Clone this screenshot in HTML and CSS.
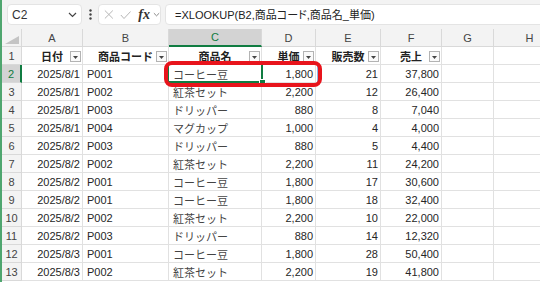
FILE: index.html
```html
<!DOCTYPE html>
<html lang="ja">
<head>
    <meta charset="UTF-8">
    <meta name="viewport" content="width=device-width, initial-scale=1.0">
    <title>XLOOKUP</title>
    <link rel="stylesheet" href="styles.css">
</head>
<body>
    <div class="formula-bar">
        <div class="name-box">
            <span>C2</span>
            <svg width="9" height="6" viewBox="0 0 9 6"><polyline points="1,1 4.5,4.5 8,1" fill="none" stroke="#444" stroke-width="1.2"/></svg>
        </div>
        <div class="grip">
            <svg width="3" height="11" viewBox="0 0 3 11"><circle cx="1.5" cy="1.5" r="1.2" fill="#444"/><circle cx="1.5" cy="5.5" r="1.2" fill="#444"/><circle cx="1.5" cy="9.5" r="1.2" fill="#444"/></svg>
        </div>
        <div class="fx-box">
            <svg class="icon-x" width="11" height="11" viewBox="0 0 11 11"><path d="M1 1L10 10M10 1L1 10" stroke="#b4b4b4" stroke-width="1.1"/></svg>
            <svg class="icon-ok" width="13" height="10" viewBox="0 0 13 10"><polyline points="1,5 4.5,9 12,1" fill="none" stroke="#b4b4b4" stroke-width="1.1"/></svg>
            <i class="fx">fx</i>
            <svg width="8" height="5" viewBox="0 0 8 5"><polyline points="1,1 4,4 7,1" fill="none" stroke="#777" stroke-width="1"/></svg>
        </div>
        <div class="formula">=XLOOKUP(B2,商品コード,商品名_単価)</div>
    </div>

    <div class="sheet-wrap">
        <div class="sheet" id="sheet"></div>
        <div class="spill"></div>
        <div class="selection"><span class="handle"></span></div>
        <div class="callout"></div>
    </div>

    <script>
        const columns = ["A", "B", "C", "D", "E", "F", "G", "H"];
        const headers = ["日付", "商品コード", "商品名", "単価", "販売数", "売上"];
        const rows = [
            ["2025/8/1", "P001", "コーヒー豆", "1,800", "21", "37,800"],
            ["2025/8/1", "P002", "紅茶セット", "2,200", "12", "26,400"],
            ["2025/8/1", "P003", "ドリッパー", "880", "8", "7,040"],
            ["2025/8/1", "P004", "マグカップ", "1,000", "4", "4,000"],
            ["2025/8/2", "P003", "ドリッパー", "880", "5", "4,400"],
            ["2025/8/2", "P002", "紅茶セット", "2,200", "11", "24,200"],
            ["2025/8/2", "P001", "コーヒー豆", "1,800", "17", "30,600"],
            ["2025/8/2", "P001", "コーヒー豆", "1,800", "18", "32,400"],
            ["2025/8/2", "P002", "紅茶セット", "2,200", "10", "22,000"],
            ["2025/8/2", "P003", "ドリッパー", "880", "14", "12,320"],
            ["2025/8/3", "P001", "コーヒー豆", "1,800", "28", "50,400"],
            ["2025/8/3", "P002", "紅茶セット", "2,200", "19", "41,800"]
        ];
        // which columns are right aligned
        const alignRight = [true, false, false, true, true, true];

        const sheet = document.getElementById('sheet');

        function addCell(text, className) {
            const div = document.createElement('div');
            div.className = 'cell ' + className;
            div.textContent = text;
            sheet.appendChild(div);
            return div;
        }

        // column letters
        addCell("", "corner");
        columns.forEach(letter => {
            addCell(letter, letter === "C" ? "col-head active" : "col-head");
        });

        // table header row
        addCell("1", "row-head");
        headers.forEach(text => {
            const th = addCell(text, "table-head");
            const btn = document.createElement('span');
            btn.className = 'filter';
            btn.innerHTML = '<svg width="5" height="3" viewBox="0 0 5 3"><path d="M0 0H5L2.5 3Z" fill="#444"/></svg>';
            th.appendChild(btn);
        });
        addCell("", "blank");
        addCell("", "blank");

        rows.forEach((row, i) => {
            const num = i + 2;
            addCell(String(num), num === 2 ? "row-head active" : "row-head");
            row.forEach((value, c) => {
                let cls = alignRight[c] ? "num" : "text";
                if (c === 2) cls += " jp";
                addCell(value, cls);
            });
            addCell("", "blank");
            addCell("", "blank");
        });
    </script>
</body>
</html>
```

FILE: styles.css
```css
body {
    margin: 0;
    height: 282px;
    overflow: hidden;
    border-left: 2px solid #4fa66f;
    font-family: "Liberation Sans", "Noto Sans CJK JP", sans-serif;
    color: #262626;
    background: #fff;
}

/* formula bar */

.formula-bar {
    display: flex;
    align-items: center;
    height: 29px;
    padding-left: 5px;
    background: #f3f3f3;
    overflow: hidden;
}

.name-box {
    display: flex;
    align-items: center;
    justify-content: space-between;
    box-sizing: border-box;
    width: 75px;
    height: 21px;
    padding: 0 4px 0 4px;
    background: #fff;
    border: 1px solid #e4e4e4;
    border-radius: 4px;
    font-size: 12px;
    color: #333;
}

.grip {
    display: flex;
    justify-content: center;
    width: 16px;
}

.fx-box {
    display: flex;
    align-items: center;
    box-sizing: border-box;
    width: 63px;
    height: 21px;
    padding-left: 5px;
    background: #fff;
    border: 1px solid #e4e4e4;
    border-radius: 4px;
}

.icon-x {
    margin-right: 6px;
}

.icon-ok {
    margin-right: 7px;
}

.fx {
    font-family: "Liberation Serif", serif;
    font-size: 14px;
    font-weight: bold;
    color: #333;
    margin-right: 3px;
}

.formula {
    flex: 1;
    box-sizing: border-box;
    height: 21px;
    margin-left: 4px;
    margin-right: -20px;
    padding-left: 9px;
    line-height: 20px;
    background: #fff;
    border: 1px solid #e4e4e4;
    border-radius: 4px;
    font-family: "Liberation Sans", "Noto Sans CJK JP", sans-serif;
    font-size: 11px;
    font-feature-settings: "palt";
    color: #222;
    white-space: nowrap;
}

/* sheet grid */

.sheet-wrap {
    position: relative;
    height: 253px;
    overflow: hidden;
}

.sheet {
    display: grid;
    grid-template-columns: 20px 61px 86px 93px 54px 65px 61px 52px 72px;
    grid-auto-rows: 18px;
}

.cell {
    position: relative;
    display: flex;
    align-items: center;
    box-sizing: border-box;
    padding: 0 2px 0 4px;
    border-right: 1px solid #e1e1e1;
    border-bottom: 1px solid #e1e1e1;
    font-size: 11px;
    white-space: nowrap;
    overflow: hidden;
}

.corner {
    background: #f3f3f3;
    border-color: #d9d9d9;
}

.corner::after {
    content: "";
    position: absolute;
    right: 2px;
    bottom: 2px;
    border-left: 14px solid transparent;
    border-bottom: 8px solid #c4c4c4;
}

.col-head {
    justify-content: center;
    padding: 0;
    background: #f3f3f3;
    border-color: #d9d9d9;
    font-size: 11px;
    color: #444;
}

.row-head {
    justify-content: center;
    padding: 0;
    background: #f3f3f3;
    border-color: #d9d9d9;
    font-size: 11px;
    color: #444;
}

.col-head.active {
    background: #d3d3d3;
    color: #107c41;
    border-bottom: 2px solid #107c41;
}

.row-head.active {
    background: #d3d3d3;
    color: #107c41;
    border-right: 2px solid #107c41;
}

.table-head {
    justify-content: center;
    padding: 0;
    font-weight: bold;
    font-size: 11px;
    color: #222;
}

.filter {
    position: absolute;
    right: 1px;
    bottom: 2px;
    display: flex;
    align-items: center;
    justify-content: center;
    box-sizing: border-box;
    width: 11px;
    height: 11px;
    padding-top: 2px;
    background: #fafafa;
    border: 1px solid #b3b3b3;
}

.num {
    justify-content: flex-end;
}

.jp {
    color: #444;
}

/* overlays on the grid */

.spill {
    position: absolute;
    left: 166px;
    top: 35px;
    width: 148px;
    height: 19px;
    border: 1px solid #8ab8ea;
}

.selection {
    position: absolute;
    left: 165px;
    top: 34px;
    width: 92px;
    height: 16px;
    border: 2px solid #107c41;
}

.handle {
    position: absolute;
    right: -5px;
    bottom: -5px;
    width: 5px;
    height: 5px;
    background: #107c41;
    border: 1px solid #fff;
}

.callout {
    position: absolute;
    left: 162px;
    top: 32px;
    width: 150px;
    height: 18px;
    border: 4px solid #e8141c;
    border-radius: 8px;
}
```
